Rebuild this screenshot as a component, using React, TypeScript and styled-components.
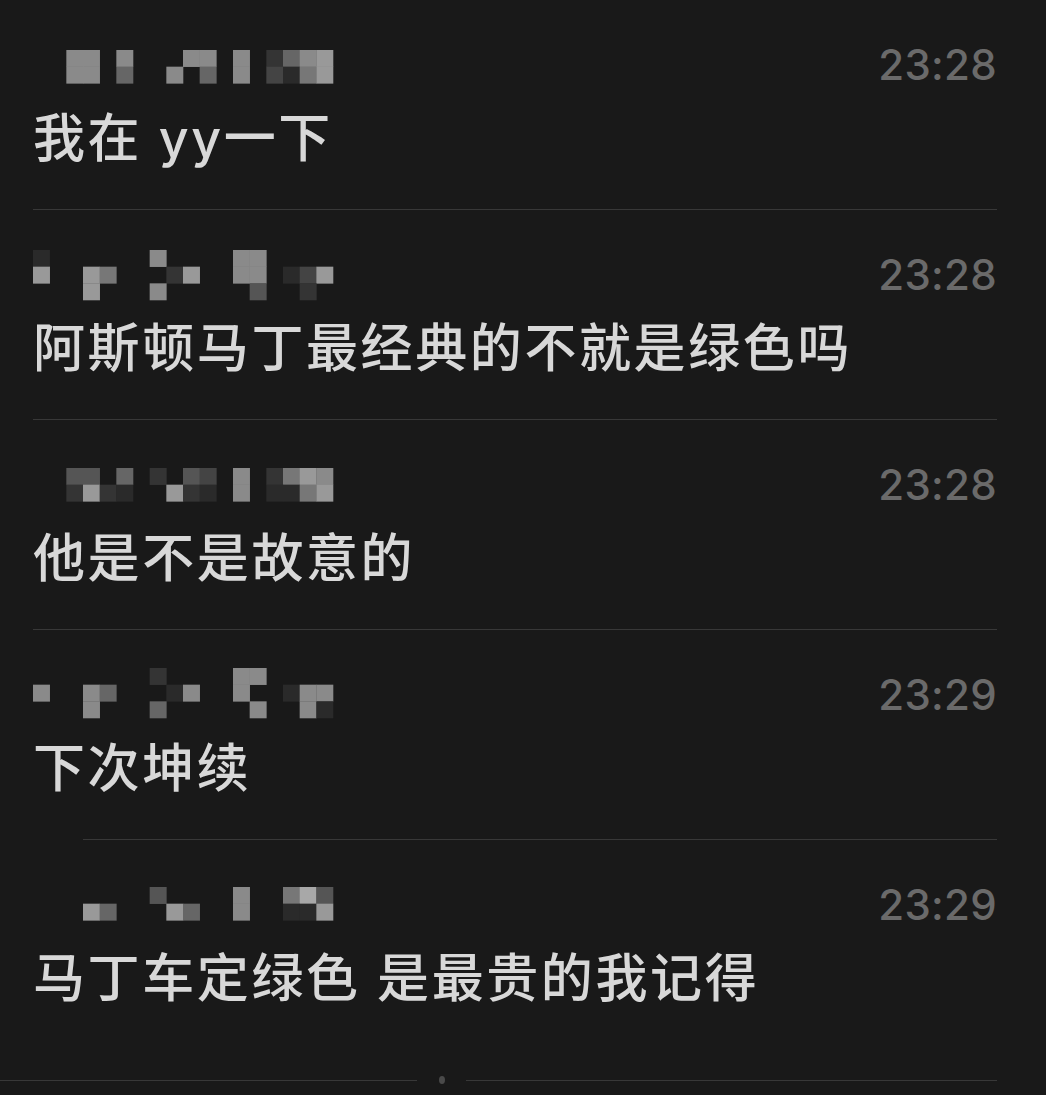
import React from 'react';
import styled, { createGlobalStyle } from 'styled-components';

const GlobalStyle = createGlobalStyle`
  html, body {
    margin: 0;
    padding: 0;
    background: #191919;
  }
  body {
    font-family: Inter, "Noto Sans CJK SC", sans-serif;
    -webkit-font-smoothing: antialiased;
  }
`;

// blurred sender names, one string per mosaic row, 18 cells each
const messages = [
  { rows: ['..88.8...88.8.3689', '..88.6..8.6.8.4279'], shift: 17, time: '23:28', text: '我在 yy一下' },
  { rows: ['2......8....88....', '9..97...39..88.249', '...9...8.....5..3.'], shift: 7, time: '23:28', text: '阿斯顿马丁最经典的不就是绿色吗' },
  { rows: ['..55.6.3.54.8.3798', '..3932..932.8.2279'], shift: 15, time: '23:28', text: '他是不是故意的' },
  { rows: ['.......3....88....', '8..86...28..8..288', '...8...6.....8..82'], shift: 5, time: '23:29', text: '下次坤续' },
  { rows: ['.......5....8..7a5', '...96...96..8..229'], shift: 14, time: '23:29', text: '马丁车定绿色 是最贵的我记得', last: true },
];

const shades: Record<string, string> = {
  '2': '#2a2a2a',
  '3': '#343434',
  '4': '#444444',
  '5': '#555555',
  '6': '#666666',
  '7': '#777777',
  '8': '#8a8a8a',
  '9': '#999999',
  a: '#a8a8a8',
};

const CELL = 300 / 18;

export default function App() {
  return (
    <>
      <GlobalStyle />
      <Page>
        {messages.map((m, i) => (
          <Row key={i} $indent={i === 3} $last={!!m.last}>
            <Header>
              <Mosaic width="300" height="50" viewBox="0 0 300 50">
                {m.rows.map((r, y) =>
                  r.split('').map((c, x) =>
                    c === '.' ? null : (
                      <rect
                        key={`${y}-${x}`}
                        x={x * CELL}
                        y={m.shift + y * CELL}
                        width={CELL + 0.3}
                        height={CELL + 0.3}
                        fill={shades[c]}
                      />
                    )
                  )
                )}
              </Mosaic>
              <Time>{m.time}</Time>
            </Header>
            <Message>{m.text}</Message>
          </Row>
        ))}
        <Footer>
          <FooterLine $w={418} />
          <Dot />
          <FooterLine $w={532} />
        </Footer>
      </Page>
    </>
  );
}

const Page = styled.div`
  width: 1046px;
  height: 1095px;
  overflow: hidden;
  padding-left: 33px;
  padding-right: 49px;
  box-sizing: border-box;
  display: flex;
  flex-direction: column;
`;

const Row = styled.div<{ $indent: boolean; $last: boolean }>`
  position: relative;
  height: 210px;
  box-sizing: border-box;
  padding-top: 33px;

  &::after {
    content: '';
    display: ${(p) => (p.$last ? 'none' : 'block')};
    position: absolute;
    left: ${(p) => (p.$indent ? '50px' : '0')};
    right: 0;
    bottom: 0;
    height: 1px;
    background: #383838;
  }
`;

const Header = styled.div`
  display: flex;
  justify-content: space-between;
  align-items: flex-start;
  height: 50px;
`;

const Mosaic = styled.svg`
  display: block;
  overflow: visible;
`;

const Time = styled.div`
  margin-top: 11px;
  font-family: Inter, "Liberation Sans", sans-serif;
  font-size: 42px;
  font-weight: 500;
  line-height: 42px;
  color: #6a6a6a;
  letter-spacing: 0.3px;
`;

const Message = styled.div`
  margin-top: 26px;
  font-family: Inter, "Noto Sans CJK SC", sans-serif;
  font-size: 52px;
  font-weight: 500;
  line-height: 60px;
  color: #d8d8d8;
  letter-spacing: 2.6px;
  white-space: nowrap;
`;

const Footer = styled.div`
  display: flex;
  align-items: center;
  margin-left: -33px;
  margin-top: 29px;
  height: 2px;
`;

const FooterLine = styled.div<{ $w: number }>`
  width: ${(p) => p.$w}px;
  height: 1px;
  background: #383838;
`;

const Dot = styled.div`
  width: 6px;
  height: 8px;
  border-radius: 50%;
  background: #4a4a4a;
  margin: 0 21px 0 22px;
`;
